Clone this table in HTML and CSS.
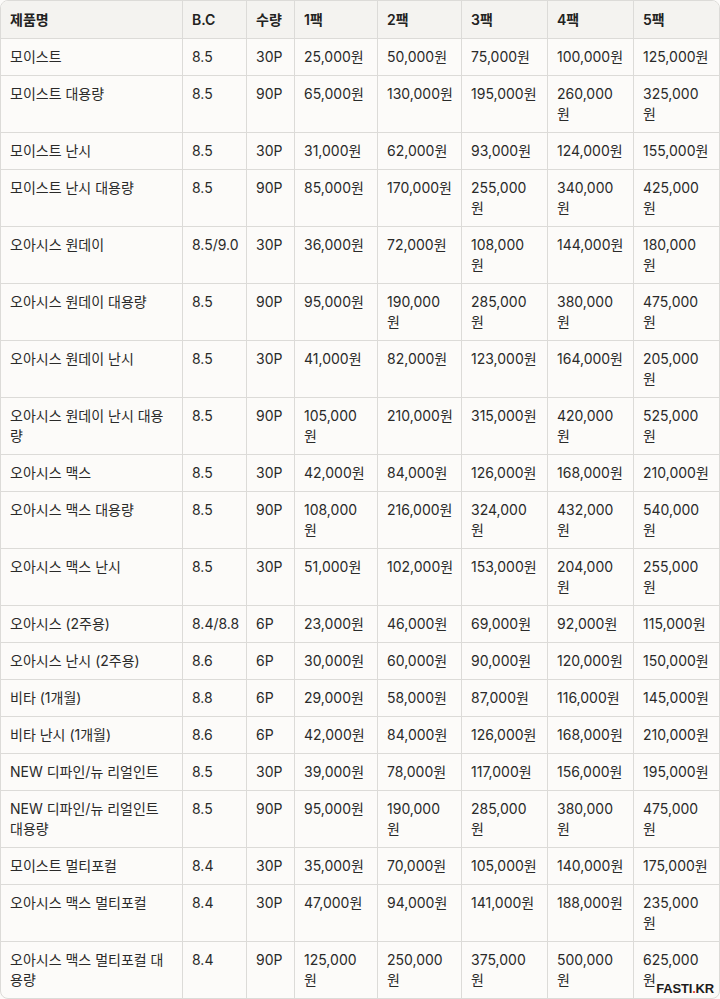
FILE: index.html
```html
<!DOCTYPE html>
<html lang="ko">
<head>
<meta charset="utf-8">
<title>가격표</title>
<link rel="stylesheet" href="styles.css">
</head>
<body>
<div class="frame">
  <table class="price">
    <colgroup>
      <col class="c-name"><col class="c-bc"><col class="c-qty"><col class="c-p1"><col class="c-p2"><col class="c-p3"><col class="c-p4"><col class="c-p5">
    </colgroup>
    <thead>
      <tr><th>제품명</th><th>B.C</th><th>수량</th><th>1팩</th><th>2팩</th><th>3팩</th><th>4팩</th><th>5팩</th></tr>
    </thead>
    <tbody>
      <tr><td>모이스트</td><td>8.5</td><td>30P</td><td>25,000원</td><td>50,000원</td><td>75,000원</td><td>100,000원</td><td>125,000원</td></tr>
      <tr><td>모이스트 대용량</td><td>8.5</td><td>90P</td><td>65,000원</td><td>130,000원</td><td>195,000원</td><td>260,000<br>원</td><td>325,000<br>원</td></tr>
      <tr><td>모이스트 난시</td><td>8.5</td><td>30P</td><td>31,000원</td><td>62,000원</td><td>93,000원</td><td>124,000원</td><td>155,000원</td></tr>
      <tr><td>모이스트 난시 대용량</td><td>8.5</td><td>90P</td><td>85,000원</td><td>170,000원</td><td>255,000<br>원</td><td>340,000<br>원</td><td>425,000<br>원</td></tr>
      <tr><td>오아시스 원데이</td><td>8.5/9.0</td><td>30P</td><td>36,000원</td><td>72,000원</td><td>108,000<br>원</td><td>144,000원</td><td>180,000<br>원</td></tr>
      <tr><td>오아시스 원데이 대용량</td><td>8.5</td><td>90P</td><td>95,000원</td><td>190,000<br>원</td><td>285,000<br>원</td><td>380,000<br>원</td><td>475,000<br>원</td></tr>
      <tr><td>오아시스 원데이 난시</td><td>8.5</td><td>30P</td><td>41,000원</td><td>82,000원</td><td>123,000원</td><td>164,000원</td><td>205,000<br>원</td></tr>
      <tr><td>오아시스 원데이 난시 대용<br>량</td><td>8.5</td><td>90P</td><td>105,000<br>원</td><td>210,000원</td><td>315,000원</td><td>420,000<br>원</td><td>525,000<br>원</td></tr>
      <tr><td>오아시스 맥스</td><td>8.5</td><td>30P</td><td>42,000원</td><td>84,000원</td><td>126,000원</td><td>168,000원</td><td>210,000원</td></tr>
      <tr><td>오아시스 맥스 대용량</td><td>8.5</td><td>90P</td><td>108,000<br>원</td><td>216,000원</td><td>324,000<br>원</td><td>432,000<br>원</td><td>540,000<br>원</td></tr>
      <tr><td>오아시스 맥스 난시</td><td>8.5</td><td>30P</td><td>51,000원</td><td>102,000원</td><td>153,000원</td><td>204,000<br>원</td><td>255,000<br>원</td></tr>
      <tr><td>오아시스 (2주용)</td><td>8.4/8.8</td><td>6P</td><td>23,000원</td><td>46,000원</td><td>69,000원</td><td>92,000원</td><td>115,000원</td></tr>
      <tr><td>오아시스 난시 (2주용)</td><td>8.6</td><td>6P</td><td>30,000원</td><td>60,000원</td><td>90,000원</td><td>120,000원</td><td>150,000원</td></tr>
      <tr><td>비타 (1개월)</td><td>8.8</td><td>6P</td><td>29,000원</td><td>58,000원</td><td>87,000원</td><td>116,000원</td><td>145,000원</td></tr>
      <tr><td>비타 난시 (1개월)</td><td>8.6</td><td>6P</td><td>42,000원</td><td>84,000원</td><td>126,000원</td><td>168,000원</td><td>210,000원</td></tr>
      <tr><td>NEW 디파인/뉴 리얼인트</td><td>8.5</td><td>30P</td><td>39,000원</td><td>78,000원</td><td>117,000원</td><td>156,000원</td><td>195,000원</td></tr>
      <tr><td>NEW 디파인/뉴 리얼인트<br>대용량</td><td>8.5</td><td>90P</td><td>95,000원</td><td>190,000<br>원</td><td>285,000<br>원</td><td>380,000<br>원</td><td>475,000<br>원</td></tr>
      <tr><td>모이스트 멀티포컬</td><td>8.4</td><td>30P</td><td>35,000원</td><td>70,000원</td><td>105,000원</td><td>140,000원</td><td>175,000원</td></tr>
      <tr><td>오아시스 맥스 멀티포컬</td><td>8.4</td><td>30P</td><td>47,000원</td><td>94,000원</td><td>141,000원</td><td>188,000원</td><td>235,000<br>원</td></tr>
      <tr><td>오아시스 맥스 멀티포컬 대<br>용량</td><td>8.4</td><td>90P</td><td>125,000<br>원</td><td>250,000<br>원</td><td>375,000<br>원</td><td>500,000<br>원</td><td>625,000<br>원</td></tr>
    </tbody>
  </table>
  <div class="mark">FASTI<span class="dot">.</span>KR</div>
</div>
</body>
</html>
```

FILE: styles.css
```css
html, body {
  margin: 0;
  padding: 0;
  background: #fcfbf9;
}

.frame {
  position: relative;
  width: 720px;
  box-sizing: border-box;
  border: 1px solid #dcdbd8;
  border-radius: 8px;
  overflow: hidden;
  background: #fcfbf9;
}

.price {
  width: 718px;
  table-layout: fixed;
  border-collapse: separate;
  border-spacing: 0;
  font-family: Inter, "Noto Sans CJK KR", sans-serif;
  font-size: 14px;
  line-height: 20px;
  color: #2a2a29;
}

.c-name { width: 182px; }
.c-bc { width: 64px; }
.c-qty { width: 48px; }
.c-p1 { width: 83px; }
.c-p2 { width: 84px; }
.c-p3 { width: 86px; }
.c-p4 { width: 86px; }
.c-p5 { width: 85px; }

.price th,
.price td {
  box-sizing: border-box;
  padding: 8px 9px 8px 9px;
  text-align: left;
  vertical-align: top;
  white-space: nowrap;
  border-right: 1px solid #dcdbd8;
  border-bottom: 1px solid #dcdbd8;
  overflow: visible;
}

.price th:last-child,
.price td:last-child {
  border-right: none;
}

.price tbody tr:last-child td {
  border-bottom: none;
}

.price th {
  padding-top: 9px;
  background: #f4f3f0;
  font-weight: 600;
  color: #222221;
}

.mark {
  position: absolute;
  right: 5px;
  bottom: 3px;
  font-family: "Liberation Sans", Arial, sans-serif;
  font-weight: 700;
  font-size: 13px;
  line-height: 13px;
  letter-spacing: -0.2px;
  color: #1c1c1c;
}

.mark .dot {
  color: #e4432d;
}
```
